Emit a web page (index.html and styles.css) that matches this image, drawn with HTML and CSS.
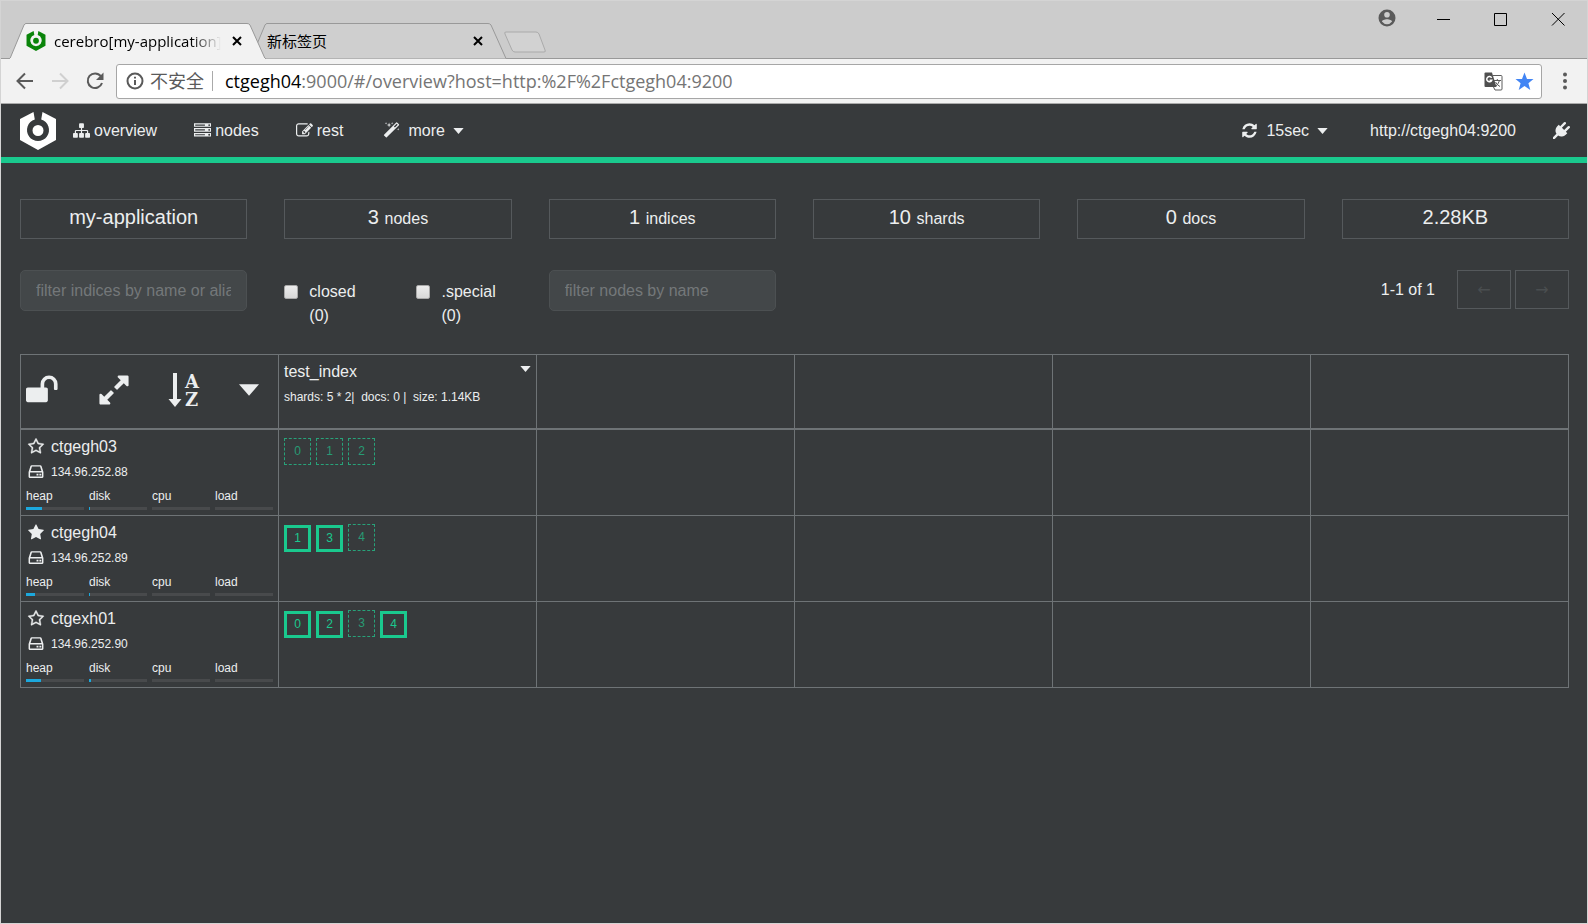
FILE: index.html
```html
<!DOCTYPE html>
<html lang="zh">
<head>
<meta charset="utf-8">
<title>cerebro[my-application]</title>
<link rel="stylesheet" href="styles.css">
</head>
<body>
<svg class="defs" aria-hidden="true">
  <symbol id="logo" viewBox="0 0 36 38"><path fill-rule="evenodd" d="M0 7L13.500 0L14.800 7.500A11 11 0 1 0 21.200 7.500L22.500 0L36 7V28L18 38L0 28ZM18 13A5.500 5.500 0 1 1 18 24A5.500 5.500 0 1 1 18 13Z"/></symbol>
  <symbol id="sitemap" viewBox="0 0 1792 1792"><path d="M1792 1248v320q0 40-28 68t-68 28h-320q-40 0-68-28t-28-68v-320q0-40 28-68t68-28h96v-192h-512v192h96q40 0 68 28t28 68v320q0 40-28 68t-68 28h-320q-40 0-68-28t-28-68v-320q0-40 28-68t68-28h96v-192h-512v192h96q40 0 68 28t28 68v320q0 40-28 68t-68 28h-320q-40 0-68-28t-28-68v-320q0-40 28-68t68-28h96v-192q0-52 38-90t90-38h512v-192h-96q-40 0-68-28t-28-68v-320q0-40 28-68t68-28h320q40 0 68 28t28 68v320q0 40-28 68t-68 28h-96v192h512q52 0 90 38t38 90v192h96q40 0 68 28t28 68z"/></symbol>
  <symbol id="server" viewBox="0 0 1792 1792"><path d="M128 1408h1024v-128h-1024v128zm0-512h1024v-128h-1024v128zm1568 448q0-40-28-68t-68-28-68 28-28 68 28 68 68 28 68-28 28-68zm-1568-960h1024v-128h-1024v128zm1568 448q0-40-28-68t-68-28-68 28-28 68 28 68 68 28 68-28 28-68zm0-512q0-40-28-68t-68-28-68 28-28 68 28 68 68 28 68-28 28-68zm96 832v384h-1792v-384h1792zm0-512v384h-1792v-384h1792zm0-512v384h-1792v-384h1792z"/></symbol>
  <symbol id="edit" viewBox="0 0 1792 1792"><path d="M888 1184l116-116-152-152-116 116v56h96v96h56zm440-720q-16-16-33 1l-350 350q-17 17-1 33t33-1l350-350q17-17 1-33zm80 594v190q0 119-84.500 203.500t-203.500 84.500h-832q-119 0-203.500-84.500t-84.500-203.500v-832q0-119 84.500-203.500t203.500-84.500h832q63 0 117 25 15 7 18 23 3 17-9 29l-49 49q-14 14-32 8-23-6-45-6h-832q-66 0-113 47t-47 113v832q0 66 47 113t113 47h832q66 0 113-47t47-113v-126q0-13 9-22l64-64q15-15 35-7t20 29zm-96-738l288 288-672 672h-288v-288zm444 132l-92 92-288-288 92-92q28-28 68-28t68 28l152 152q28 28 28 68t-28 68z"/></symbol>
  <symbol id="magic" viewBox="0 0 1792 1792"><path d="M1254 581l293-293-107-107-293 293zm447-293q0 27-18 45l-1286 1286q-18 18-45 18t-45-18l-198-198q-18-18-18-45t18-45l1286-1286q18-18 45-18t45 18l198 198q18 18 18 45zm-1351-190l98 30-98 30-30 98-30-98-98-30 98-30 30-98zm350 162l196 60-196 60-60 196-60-196-196-60 196-60 60-196zm930 478l98 30-98 30-30 98-30-98-98-30 98-30 30-98zm-640-640l98 30-98 30-30 98-30-98-98-30 98-30 30-98z"/></symbol>
  <symbol id="refresh" viewBox="0 0 1792 1792"><path d="M1639 1056q0 5-1 7-64 268-268 434.500t-478 166.500q-146 0-282.500-55t-243.500-157l-129 129q-19 19-45 19t-45-19-19-45v-448q0-26 19-45t45-19h448q26 0 45 19t19 45-19 45l-137 137q71 66 161 102t187 36q134 0 250-65t186-179q11-17 53-117 8-23 30-23h192q13 0 22.500 9.500t9.500 22.500zm25-800v448q0 26-19 45t-45 19h-448q-26 0-45-19t-19-45 19-45l138-138q-148-137-349-137-134 0-250 65t-186 179q-11 17-53 117-8 23-30 23h-199q-13 0-22.500-9.500t-9.500-22.500v-7q65-268 270-434.500t480-166.500q146 0 284 55.500t245 156.500l130-129q19-19 45-19t45 19 19 45z"/></symbol>
  <symbol id="plug" viewBox="0 0 1792 1792"><path d="M1755 453q37 38 37 90.500t-37 90.500l-401 400 150 150-160 160q-163 163-389.500 186.500t-411.500-100.500l-362 362h-181v-181l362-362q-124-185-100.500-411.500t186.500-389.500l160-160 150 150 400-401q38-37 91-37t90 37 37 90.500-37 90.500l-400 401 234 234 401-400q38-37 91-37t90 37z"/></symbol>
  <symbol id="unlock" viewBox="0 0 1792 1792"><path d="M1664 576v256q0 26-19 45t-45 19h-64q-26 0-45-19t-19-45v-256q0-106-75-181t-181-75-181 75-75 181v192h96q40 0 68 28t28 68v576q0 40-28 68t-68 28h-960q-40 0-68-28t-28-68v-576q0-40 28-68t68-28h672v-192q0-185 131.500-316.500t316.500-131.500 316.500 131.500 131.500 316.500z"/></symbol>
  <symbol id="expand" viewBox="0 0 1792 1792"><path d="M883 1056q0 13-10 23l-332 332 144 144q19 19 19 45t-19 45-45 19h-448q-26 0-45-19t-19-45v-448q0-26 19-45t45-19 45 19l144 144 332-332q10-10 23-10t23 10l114 114q10 10 10 23zm781-864v448q0 26-19 45t-45 19-45-19l-144-144-332 332q-10 10-23 10t-23-10l-114-114q-10-10-10-23t10-23l332-332-144-144q-19-19-19-45t19-45 45-19h448q26 0 45 19t19 45z"/></symbol>
  <symbol id="star" viewBox="0 0 1792 1792"><path d="M1728 647q0 22-26 48l-363 354 86 500q1 7 1 20 0 21-10.500 35.500t-30.500 14.500q-19 0-40-12l-449-236-449 236q-22 12-40 12-21 0-31.500-14.500t-10.500-35.500q0-6 2-20l86-500-364-354q-25-27-25-48 0-37 56-46l502-73 225-455q19-41 49-41t49 41l225 455 502 73q56 9 56 46z"/></symbol>
  <symbol id="star-o" viewBox="0 0 1792 1792"><path stroke="currentColor" stroke-width="40" d="M1201 1004l306-297-422-62-189-382-189 382-422 62 306 297-73 421 378-199 377 199zm527-357q0 22-26 48l-363 354 86 500q1 7 1 20 0 50-41 50-19 0-40-12l-449-236-449 236q-22 12-40 12-21 0-31.500-14.500t-10.500-35.500q0-6 2-20l86-500-364-354q-25-27-25-48 0-37 56-46l502-73 225-455q19-41 49-41t49 41l225 455 502 73q56 9 56 46z"/></symbol>
  <symbol id="hdd" viewBox="0 0 16 16"><path fill-rule="evenodd" d="M4 2H12Q13 2 13.300 3L15 8.500V13Q15 14 14 14H2Q1 14 1 13V8.500L2.700 3Q3 2 4 2ZM4.200 3.400L2.900 7.600H13.100L11.800 3.400ZM2.400 9V12.600H13.600V9ZM8.500 10H10.300V11.700H8.500ZM11.200 10H13V11.700H11.200Z"/></symbol>
  <symbol id="caret" viewBox="0 0 12 7"><path d="M0 0H12L6 7Z"/></symbol>
  <symbol id="close" viewBox="0 0 10 10"><path d="M1 1L9 9M9 1L1 9" fill="none" stroke="currentColor" stroke-width="2"/></symbol>
</svg>

<header class="chrome">
  <div class="tabstrip">
    <div class="tab tab-active">
      <svg class="tab-shape" viewBox="0 0 257 36"><path d="M0 36L1 35.500L15 2Q16 .5 17 .5H238Q240 .5 241 2L256 35.500L257 36Z"/></svg>
      <svg class="favicon"><use href="#logo"/></svg>
      <span class="tab-title">cerebro[my-application]</span>
      <button class="tab-close" aria-label="关闭"><svg><use href="#close"/></svg></button>
    </div>
    <div class="tab tab-idle">
      <svg class="tab-shape" viewBox="0 0 257 36"><path d="M0 36L1 35.500L15 2Q16 .5 17 .5H238Q240 .5 241 2L256 35.500L257 36Z"/></svg>
      <span class="tab-title">新标签页</span>
      <button class="tab-close" aria-label="关闭"><svg><use href="#close"/></svg></button>
    </div>
    <button class="tab-new" aria-label="打开新的标签页"><svg viewBox="0 0 44 23"><path d="M3 1H33Q35 1 36 3L42 19Q43 21 41 21H12Q10 21 9 19L2 3Q1 1 3 1Z"/></svg></button>
    <div class="window-buttons">
      <button aria-label="用户"><svg viewBox="0 0 18 18"><path fill="#5a5a5a" fill-rule="evenodd" d="M9 .5A8.500 8.500 0 1 1 9 17.500A8.500 8.500 0 1 1 9 .5ZM9 3A2.800 2.800 0 1 0 9 8.600A2.800 2.800 0 1 0 9 3ZM9 10.200C6.500 10.200 3.900 11.400 3.900 12.600Q6 15.300 9 15.300T14.100 12.600C14.100 11.400 11.500 10.200 9 10.200Z"/></svg></button>
      <button aria-label="最小化"><svg viewBox="0 0 18 18"><path d="M2 10.500H15"/></svg></button>
      <button aria-label="最大化"><svg viewBox="0 0 18 18"><path d="M2.500 4.500H14.500V16.500H2.500Z"/></svg></button>
      <button aria-label="关闭"><svg viewBox="0 0 18 18"><path d="M3 4L15.500 16.500M15.500 4L3 16.500"/></svg></button>
    </div>
  </div>
  <div class="toolbar">
    <button class="tool" aria-label="后退"><svg viewBox="0 0 18 18"><path d="M17 9H2M9 1.500L1.500 9L9 16.500"/></svg></button>
    <button class="tool tool-off" aria-label="前进"><svg viewBox="0 0 18 18"><path d="M1 9H16M9 1.500L16.500 9L9 16.500"/></svg></button>
    <button class="tool" aria-label="重新加载"><svg viewBox="0 0 18 18"><path d="M14.800 4.200A7.300 7.300 0 1 0 16 11"/><path class="solid" d="M17.500 .5V8H10Z"/></svg></button>
    <div class="omnibox">
      <svg class="info" viewBox="0 0 18 18"><circle cx="9" cy="9" r="7.500"/><path d="M9 8V13M9 4.800V6.600"/></svg>
      <span class="insecure">不安全</span>
      <span class="url"><b>ctgegh04</b>:9000/#/overview?host=http:%2F%2Fctgegh04:9200</span>
      <button class="omni-icon" aria-label="翻译"><svg viewBox="0 0 19 19"><path fill="#4f4f4f" d="M1.500 .5H8L12.500 15H1.500Q.5 15 .5 14V1.500Q.5 .5 1.500 .5Z"/><path fill="none" stroke="#fff" stroke-width="1.500" d="M7.600 5.800A2.600 2.600 0 1 0 7.700 8.300H5.600"/><path fill="none" stroke="#5c5c5c" d="M9 3.500H17Q18 3.500 18 4.500V17Q18 18 17 18H11L9.500 15M10 8.500H17M13.300 7V8.500M15.500 8.500Q14.500 12 11.500 14.500M11.500 10Q13 13 16 14.500"/></svg></button>
      <button class="omni-icon" aria-label="收藏"><svg viewBox="0 0 19 19"><path fill="#4285f4" d="M9.500 .5L12 7H18.500L13.400 11.200L15.300 18L9.500 14L3.700 18L5.600 11.200L.5 7H7Z"/></svg></button>
    </div>
    <button class="menu" aria-label="菜单"><svg viewBox="0 0 4 18"><circle cx="2" cy="2.500" r="2"/><circle cx="2" cy="9" r="2"/><circle cx="2" cy="15.500" r="2"/></svg></button>
  </div>
</header>

<nav class="navbar">
  <a class="brand" href="#" aria-label="cerebro"><svg><use href="#logo"/></svg></a>
  <a class="nav-link" href="#overview"><svg class="fa"><use href="#sitemap"/></svg>overview</a>
  <a class="nav-link" href="#nodes"><svg class="fa"><use href="#server"/></svg>nodes</a>
  <a class="nav-link" href="#rest"><svg class="fa"><use href="#edit"/></svg>rest</a>
  <button class="nav-link nav-drop"><svg class="fa"><use href="#magic"/></svg>more<svg class="caret"><use href="#caret"/></svg></button>
  <button class="nav-link nav-drop nav-refresh"><svg class="fa"><use href="#refresh"/></svg>15sec<svg class="caret"><use href="#caret"/></svg></button>
  <a class="nav-link" href="#host">http://ctgegh04:9200</a>
  <a class="nav-link nav-plug" href="#connect" aria-label="disconnect"><svg class="fa"><use href="#plug"/></svg></a>
</nav>

<main class="page">
  <section class="grid stats">
    <div class="stat">my-application</div>
    <div class="stat">3 <small>nodes</small></div>
    <div class="stat">1 <small>indices</small></div>
    <div class="stat">10 <small>shards</small></div>
    <div class="stat">0 <small>docs</small></div>
    <div class="stat">2.28KB</div>
  </section>

  <section class="grid filters">
    <input class="field" type="text" placeholder="filter indices by name or aliases" aria-label="filter indices">
    <div class="checks">
      <label><input type="checkbox"><span>closed (0)</span></label>
      <label><input type="checkbox"><span>.special (0)</span></label>
    </div>
    <input class="field" type="text" placeholder="filter nodes by name" aria-label="filter nodes">
    <div class="pager">
      <span>1-1 of 1</span>
      <button disabled>←</button>
      <button disabled>→</button>
    </div>
  </section>

  <table class="shardmap">
    <thead>
      <tr>
        <th>
          <div class="actions">
            <button aria-label="unlock"><svg><use href="#unlock"/></svg></button>
            <button aria-label="expand"><svg><use href="#expand"/></svg></button>
            <button aria-label="sort"><svg viewBox="0 0 34 34"><path d="M5 0H9V26H13.500L7 34L.5 26H5Z"/><text x="17" y="15">A</text><text x="17" y="33">Z</text></svg></button>
            <button aria-label="menu"><svg class="big-caret"><use href="#caret"/></svg></button>
          </div>
        </th>
        <th>
          <div class="index-head"><span>test_index</span><button aria-label="index menu"><svg class="caret"><use href="#caret"/></svg></button></div>
          <div class="index-info">shards: 5 * 2|&nbsp; docs: 0 |&nbsp; size: 1.14KB</div>
        </th>
        <th></th><th></th><th></th><th></th>
      </tr>
    </thead>
    <tbody>
      <tr>
        <td>
          <div class="node-name"><svg class="fa"><use href="#star-o"/></svg>ctgegh03</div>
          <div class="node-ip"><svg class="fa"><use href="#hdd"/></svg>134.96.252.88</div>
          <div class="meters">
            <div>heap<i><b style="width:28%"></b></i></div><div>disk<i><b style="width:2%"></b></i></div><div>cpu<i></i></div><div>load<i></i></div>
          </div>
        </td>
        <td><div class="shards"><span class="shard replica">0</span><span class="shard replica">1</span><span class="shard replica">2</span></div></td>
        <td></td><td></td><td></td><td></td>
      </tr>
      <tr>
        <td>
          <div class="node-name"><svg class="fa"><use href="#star"/></svg>ctgegh04</div>
          <div class="node-ip"><svg class="fa"><use href="#hdd"/></svg>134.96.252.89</div>
          <div class="meters">
            <div>heap<i><b style="width:16%"></b></i></div><div>disk<i><b style="width:2%"></b></i></div><div>cpu<i></i></div><div>load<i></i></div>
          </div>
        </td>
        <td><div class="shards"><span class="shard primary">1</span><span class="shard primary">3</span><span class="shard replica">4</span></div></td>
        <td></td><td></td><td></td><td></td>
      </tr>
      <tr>
        <td>
          <div class="node-name"><svg class="fa"><use href="#star-o"/></svg>ctgexh01</div>
          <div class="node-ip"><svg class="fa"><use href="#hdd"/></svg>134.96.252.90</div>
          <div class="meters">
            <div>heap<i><b style="width:26%"></b></i></div><div>disk<i><b style="width:4%"></b></i></div><div>cpu<i></i></div><div>load<i></i></div>
          </div>
        </td>
        <td><div class="shards"><span class="shard primary">0</span><span class="shard primary">2</span><span class="shard replica">3</span><span class="shard primary">4</span></div></td>
        <td></td><td></td><td></td><td></td>
      </tr>
    </tbody>
  </table>
</main>
</body>
</html>
```

FILE: styles.css
```css
* { box-sizing: border-box; }

body {
  margin: 0;
  min-height: 100vh;
  border: 1px solid #d4d4d4;
  background: #373a3c;
  color: #eceeef;
  font: 16px/24px "Liberation Sans", Arial, "Noto Sans CJK SC", sans-serif;
}

svg { display: block; fill: currentColor; flex: none; }
.defs { position: absolute; width: 0; height: 0; }

button {
  margin: 0;
  padding: 0;
  border: 0;
  background: none;
  color: inherit;
  font: inherit;
}

a { color: inherit; text-decoration: none; }

/* browser frame */
.chrome {
  background: #cccccc;
  color: #000;
  font-family: "Open Sans", "Noto Sans CJK SC", sans-serif;
}

.tabstrip {
  display: flex;
  align-items: flex-end;
  height: 58px;
  padding-left: 8px;
  border-bottom: 1px solid #999;
}

.tab {
  position: relative;
  display: flex;
  align-items: center;
  width: 257px;
  height: 36px;
  margin-bottom: -1px;
  padding: 0 24px 0 17px;
  font-size: 15px;
  line-height: 22px;
}

.tab-shape {
  position: absolute;
  left: 0;
  top: 0;
  width: 257px;
  height: 36px;
  stroke: #999;
}

.tab-active { z-index: 1; }
.tab-active .tab-shape { fill: #f2f2f2; }
.tab-active::after {
  content: "";
  position: absolute;
  left: 1px;
  right: 1px;
  bottom: 0;
  height: 1px;
  background: #f2f2f2;
}
.tab-idle { margin-left: -16px; }
.tab-idle .tab-shape { fill: #cfcfcf; }

.favicon {
  position: relative;
  width: 20px;
  height: 20px;
  margin-right: 8px;
  color: #0a840a;
}

.tab-title {
  position: relative;
  flex: 1;
  overflow: hidden;
  white-space: nowrap;
  margin-right: 11px;
}

.tab-active .tab-title { mask-image: linear-gradient(to left, transparent, #000 30px); }

.tab-close { position: relative; }
.tab-close svg { width: 10px; height: 10px; }

.tab-new { margin: 0 0 4px -4px; }
.tab-new svg { width: 44px; height: 23px; fill: #d2d2d2; stroke: #aaa; }

.window-buttons {
  display: flex;
  align-self: flex-start;
  gap: 39px;
  margin-left: auto;
  padding: 8px 20px 0 0;
}
.window-buttons svg { width: 18px; height: 18px; fill: none; stroke: #000; }
.window-buttons button:first-child svg { stroke: none; }

.toolbar {
  display: flex;
  align-items: center;
  height: 45px;
  padding-left: 15px;
  background: #f2f2f2;
  border-bottom: 1px solid #aaa;
}

.tool { margin-right: 17px; color: #5a5a5a; }
.tool svg { width: 18px; height: 18px; fill: none; stroke: currentColor; stroke-width: 2; }
.tool .solid { fill: currentColor; stroke: none; }
.tool-off { color: #d0d0d0; }

.omnibox {
  display: flex;
  flex: 1;
  align-items: center;
  height: 35px;
  margin-left: -5px;
  padding: 0 7px 0 9px;
  border: 1px solid #a6a6a6;
  border-radius: 3px;
  background: #fff;
}

.info { width: 18px; height: 18px; fill: none; stroke: #5a5a5a; stroke-width: 2; }
.insecure {
  margin-left: 6px;
  padding-right: 8px;
  border-right: 1px solid #aaa;
  color: #5a5a5a;
  font-size: 18px;
  line-height: 20px;
}
.url { flex: 1; margin-left: 12px; color: #757575; font-size: 18px; white-space: nowrap; }
.url b { color: #000; font-weight: 400; }
.omni-icon { margin-left: 12px; }
.omni-icon svg { width: 19px; height: 19px; }

.menu { width: 45px; color: #5a5a5a; }
.menu svg { width: 4px; height: 18px; margin: 0 auto; }

/* application bar */
.navbar {
  display: flex;
  align-items: center;
  height: 59px;
  padding: 0 17px 0 19px;
  border-bottom: 6px solid #1ac98e;
}

.brand { margin-right: 17px; }
.brand svg { width: 36px; height: 38px; fill: #fff; }

.nav-link { display: flex; align-items: center; gap: 4px; margin-right: 37px; }
.nav-drop { gap: 8px; margin-left: 3px; }
.fa { width: 17px; height: 17px; }
.caret { width: 11px; height: 6px; }
.nav-refresh { margin-left: auto; margin-right: 42px; }
.nav-plug { margin-right: 0; }

/* cluster overview */
.page { padding: 36px 18px 24px 19px; }

.grid {
  display: grid;
  grid-template-columns: repeat(6, 1fr);
  column-gap: 37px;
  align-items: start;
}

.stat {
  height: 40px;
  border: 1px solid #55595c;
  font-size: 20px;
  line-height: 35px;
  text-align: center;
}
.stat small { font-size: 16px; }

.filters { margin-top: 31px; }

.field {
  width: 100%;
  height: 41px;
  padding: 0 15px;
  border: 1px solid #4c5052;
  border-radius: 5px;
  background: #434749;
  color: #eceeef;
  font: inherit;
}
.field::placeholder { color: #74787a; }

.checks { display: grid; grid-template-columns: 1fr 1fr; column-gap: 37px; padding-top: 10px; }
.checks label { display: flex; align-items: flex-start; gap: 11px; }
.checks span { width: 56px; }
.checks input {
  appearance: none;
  flex: none;
  width: 14px;
  height: 14px;
  margin: 5px 0 0;
  border: 1px solid #a9a9a9;
  border-radius: 2px;
  background: linear-gradient(#ececec, #d8d8d8);
}

.pager {
  grid-column: 4 / 7;
  display: flex;
  align-items: center;
  justify-content: flex-end;
  gap: 4px;
}
.pager span { margin-right: 18px; }
.pager button {
  width: 54px;
  height: 39px;
  border: 1px solid #55595c;
  color: #4a4e50;
  font-family: "DejaVu Sans", sans-serif;
}

.shardmap {
  width: 100%;
  margin-top: 26px;
  border-collapse: collapse;
  table-layout: fixed;
}
.shardmap th, .shardmap td {
  padding: 5px;
  border: 1px solid #6e7376;
  font-weight: 400;
  text-align: left;
  vertical-align: top;
}
.shardmap th { height: 74px; border-bottom-width: 2px; }
.shardmap td { height: 86px; }

.actions { display: flex; align-items: center; justify-content: space-between; padding: 13px 14px 0 0; }
.actions svg { width: 34px; height: 34px; }
.actions .big-caret { width: 20px; height: 12px; }
.actions text { font: bold 18px "DejaVu Serif", serif; }
.actions button svg { overflow: visible; }

.index-head { display: flex; justify-content: space-between; align-items: flex-start; }
.index-head button { padding-top: 6px; }
.index-info { font-size: 12px; line-height: 26px; }

.node-name, .node-ip { display: flex; align-items: center; gap: 6px; padding-left: 1px; }
.node-ip { font-size: 12px; line-height: 26px; }
.node-name .fa, .node-ip .fa { width: 18px; height: 17px; }

.meters { display: grid; grid-template-columns: repeat(4, 1fr); gap: 5px; font-size: 12px; line-height: 22px; }
.meters i { display: block; height: 3px; background: #484a4c; }
.meters b { display: block; height: 3px; background: #1ca8dd; }

.shards { display: flex; gap: 5px; padding-top: 3px; }
.shard {
  width: 27px;
  height: 27px;
  font-size: 12px;
  line-height: 25px;
  text-align: center;
}
.primary { margin-top: 1px; border: 3px solid #1ac98e; color: #1ac98e; line-height: 21px; }
.replica { border: 1px dashed #28a279; color: #289a74; }
```
